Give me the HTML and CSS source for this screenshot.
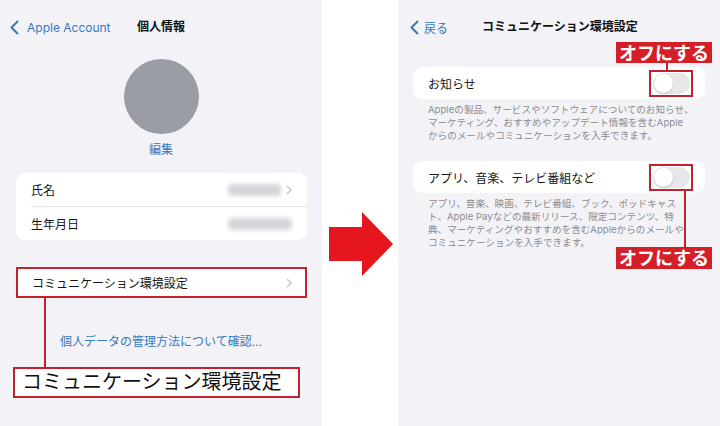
FILE: index.html
```html
<!DOCTYPE html>
<html lang="ja">
<head>
    <meta charset="UTF-8">
    <meta name="viewport" content="width=device-width, initial-scale=1.0">
    <title>コミュニケーション環境設定</title>
    <link rel="stylesheet" href="styles.css">
</head>
<body>
    <div class="screens">
        <section class="phone">
            <header class="nav">
                <a class="back">
                    <svg viewBox="0 0 9 15"><path d="M7.5 1.5 1.5 7.5 7.5 13.5"/></svg>
                    <span class="latin">Apple Account</span>
                </a>
                <h1 class="nav-title">個人情報</h1>
                <span></span>
            </header>

            <div class="profile">
                <div class="avatar"></div>
                <a class="edit">編集</a>
            </div>

            <div class="group">
                <div class="row">
                    <span>氏名</span>
                    <span class="value">
                        <span class="blur blur-name"></span>
                        <svg class="chev" viewBox="0 0 6 10"><path d="M1 1 5 5 1 9"/></svg>
                    </span>
                </div>
                <div class="row">
                    <span>生年月日</span>
                    <span class="value"><span class="blur blur-date"></span></span>
                </div>
            </div>

            <div class="group group-marked">
                <div class="row">
                    <span>コミュニケーション環境設定</span>
                    <svg class="chev" viewBox="0 0 6 10"><path d="M1 1 5 5 1 9"/></svg>
                </div>
            </div>

            <div class="pointer">
                <span class="stem"></span>
                <a class="link">個人データの管理方法について確認...</a>
            </div>

            <div class="caption">コミュニケーション環境設定</div>
        </section>

        <div class="between">
            <svg class="arrow" viewBox="0 0 64 64"><polygon points="0,15 33,15 33,0 64,32 33,64 33,49 0,49"/></svg>
        </div>

        <section class="phone">
            <header class="nav nav-right">
                <a class="back">
                    <svg viewBox="0 0 9 15"><path d="M7.5 1.5 1.5 7.5 7.5 13.5"/></svg>
                    <span>戻る</span>
                </a>
                <h1 class="nav-title">コミュニケーション環境設定</h1>
                <span></span>
            </header>

            <div class="group group-switch">
                <div class="row">
                    <span>お知らせ</span>
                    <span class="toggle-box">
                        <span class="toggle"></span>
                        <span class="callout callout-up">
                            <span class="tag">オフにする</span>
                            <span class="stem"></span>
                        </span>
                    </span>
                </div>
            </div>
            <p class="note">Appleの製品、サービスやソフトウェアについてのお知らせ、<br>マーケティング、おすすめやアップデート情報を含むApple<br>からのメールやコミュニケーションを入手できます。</p>

            <div class="group group-switch group-second">
                <div class="row">
                    <span>アプリ、音楽、テレビ番組など</span>
                    <span class="toggle-box">
                        <span class="toggle"></span>
                        <span class="callout callout-down">
                            <span class="stem"></span>
                            <span class="tag">オフにする</span>
                        </span>
                    </span>
                </div>
            </div>
            <p class="note">アプリ、音楽、映画、テレビ番組、ブック、ポッドキャス<br>ト、Apple Payなどの最新リリース、限定コンテンツ、特<br>典、マーケティングやおすすめを含むAppleからのメールや<br>コミュニケーションを入手できます。</p>
        </section>
    </div>
</body>
</html>
```

FILE: styles.css
```css
* {
    box-sizing: border-box;
}

body {
    margin: 0;
    background: #fff;
    font-family: Inter, "Noto Sans CJK JP", sans-serif;
    color: #151515;
}

.screens {
    display: flex;
    width: 720px;
    height: 426px;
    overflow: hidden;
}

.phone {
    width: 322px;
    height: 426px;
    flex: none;
    display: flex;
    flex-direction: column;
    background: #f2f2f7;
}

.between {
    width: 76px;
    flex: none;
    padding: 212px 0 0 7px;
    background: #fff;
}

.arrow {
    display: block;
    width: 64px;
    height: 64px;
    fill: #e5161e;
}

/* nav bar */
.nav {
    height: 54px;
    flex: none;
    display: grid;
    grid-template-columns: 1fr auto 1fr;
    align-items: center;
    padding: 0 10px;
}

.nav-right {
    padding-left: 12px;
}

.back {
    display: flex;
    align-items: center;
    gap: 8px;
    color: #3579c0;
    font-size: 12px;
}

.back svg {
    width: 9px;
    height: 15px;
    fill: none;
    stroke: #3579c0;
    stroke-width: 2;
    stroke-linecap: round;
    stroke-linejoin: round;
}

.nav-right .back {
    gap: 5px;
}

.nav-title {
    margin: 0;
    font-size: 12px;
    font-weight: 700;
    line-height: 16px;
    color: #111;
}

/* profile */
.profile {
    display: flex;
    flex-direction: column;
    align-items: center;
}

.avatar {
    width: 75px;
    height: 75px;
    margin-top: 5px;
    border-radius: 50%;
    background: #9a9ca6;
}

.edit {
    margin-top: 8px;
    font-size: 12px;
    line-height: 16px;
    color: #3579c0;
}

/* grouped lists */
.group {
    margin: 15px 15px 0 16px;
    padding-left: 15px;
    background: #fff;
    border-radius: 9px;
}

.row {
    height: 33px;
    display: flex;
    align-items: center;
    justify-content: space-between;
    padding-right: 15px;
    font-size: 12px;
}

.row + .row {
    height: 34px;
    border-top: 1px solid #e4e4e8;
}

.value {
    display: flex;
    align-items: center;
    gap: 5px;
}

.blur {
    display: block;
    height: 12px;
    border-radius: 4px;
    background: #d6d6da;
    filter: blur(2px);
}

.blur-name {
    width: 53px;
}

.blur-date {
    width: 64px;
}

.chev {
    width: 6px;
    height: 10px;
    fill: none;
    stroke: #c2c2c6;
    stroke-width: 1.3;
}

.group-marked {
    margin-top: 27px;
    padding-left: 14px;
    border: 2px solid #c2222b;
    border-radius: 0;
}

.group-marked .row {
    height: 27px;
    padding-right: 13px;
}

.pointer {
    height: 69px;
    flex: none;
    display: flex;
    margin-left: 44px;
}

.pointer .stem {
    width: 2px;
    background: #c2222b;
}

.link {
    align-self: flex-end;
    margin-bottom: 17px;
    padding-left: 14px;
    font-size: 12px;
    line-height: 16px;
    color: #3579c0;
}

.caption {
    margin: 0 22px 0 13px;
    height: 31px;
    padding-left: 7px;
    border: 2px solid #c2222b;
    background: #fff;
    font-size: 20px;
    line-height: 26px;
    color: #111;
}

/* switches */
.group-switch {
    margin: 13px 15px 0 15px;
}

.group-switch .row {
    height: 32px;
    padding-right: 12px;
}

.group-second {
    margin-top: 19px;
}

.toggle-box {
    position: relative;
    padding: 1px 1px 1px 2px;
    border: 2px solid #c2222b;
}

.toggle {
    display: block;
    position: relative;
    width: 37px;
    height: 21px;
    border-radius: 11px;
    background: #e7e7ea;
}

.toggle::after {
    content: "";
    position: absolute;
    left: 1px;
    top: 1px;
    width: 19px;
    height: 19px;
    border-radius: 50%;
    background: #fff;
    box-shadow: 0 1px 2px rgba(0, 0, 0, 0.2);
}

.callout {
    position: absolute;
    left: -35px;
    display: flex;
    flex-direction: column;
    align-items: flex-start;
}

.callout-up {
    bottom: calc(100% + 2px);
}

.callout-down {
    top: calc(100% + 2px);
}

.callout .stem {
    width: 2px;
    background: #c2222b;
}

.callout-up .stem {
    height: 7px;
    margin-left: 50px;
}

.callout-down .stem {
    height: 56px;
    margin-left: 68px;
}

.tag {
    width: 96px;
    height: 21px;
    background: #d51f28;
    color: #fff;
    font-family: "Noto Sans CJK JP", sans-serif;
    font-size: 18px;
    font-weight: 700;
    line-height: 21px;
    text-align: center;
    white-space: nowrap;
}

.callout-down .tag {
    height: 22px;
}

.note {
    margin: 5px 0 0 30px;
    font-size: 9.6px;
    line-height: 12.8px;
    color: #8c8c91;
    white-space: nowrap;
}
```
